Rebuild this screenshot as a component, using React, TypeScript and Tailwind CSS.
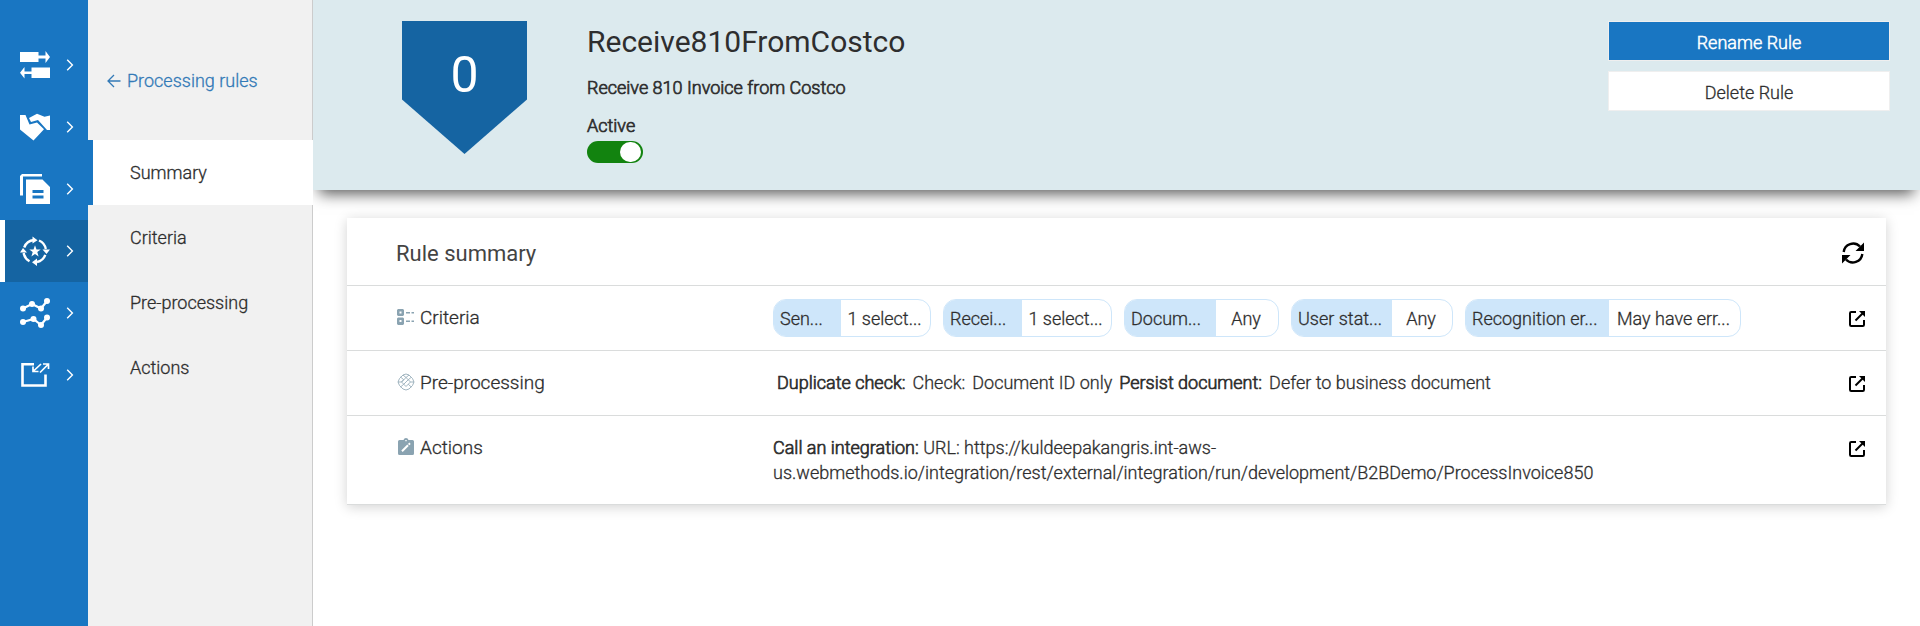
import React from "react";

function Chevron() {
  return (
    <svg width="8" height="12" viewBox="0 0 8 12" fill="none" stroke="currentColor" strokeWidth="1.4" aria-hidden="true">
      <path d="M1.2 .8 6.4 6 1.2 11.2" />
    </svg>
  );
}

function ExchangeIcon() {
  return (
    <svg width="30" height="28" viewBox="0 0 30 28" fill="currentColor" aria-hidden="true">
      <path d="M0 1h18.500v3.500H25.500V0L30 6l-4.500 6V7.500h-7V11H0z" />
      <path d="M30 16.500H11.500v4h-7V16L0 21.800l4.500 5.700v-4.500h7V27H30z" />
    </svg>
  );
}

function HandshakeIcon() {
  return (
    <svg width="30" height="28" viewBox="0 0 30 28" fill="currentColor" aria-hidden="true">
      <path d="M0 2h5.500l4 9.500 7.500-2L24 16.300 13.500 27.500 0 16.500z" />
      <path d="M9 5 17 .8l7.500 3L30 2.500V17h-3L18 7l-7 2z" />
    </svg>
  );
}

function DocumentsIcon() {
  return (
    <svg width="30" height="30" viewBox="0 0 30 30" fill="currentColor" aria-hidden="true">
      <path d="M2 0h20v2.500H3V21.500H0V2z" />
      <path fillRule="evenodd" d="M6 5.500h16.500L30 13v17H6zM12.500 16v3h11v-3zM12.500 21.500v3h11v-3z" />
    </svg>
  );
}

function ProcessingIcon() {
  return (
    <svg width="30" height="30" viewBox="0 0 30 30" fill="currentColor" aria-hidden="true">
      <g fill="none" stroke="currentColor" strokeWidth="2.400">
        <path d="M4.200 11.500A11.500 11.500 0 0 1 14 4" />
        <path d="M19 4.500A11.500 11.500 0 0 1 25.800 13" />
        <path d="M25.300 18.800A11.500 11.500 0 0 1 17 26" />
        <path d="M9.500 25.200A11.500 11.500 0 0 1 3.700 17" />
      </g>
      <path d="M12.500.5 17.500 4.200 12.500 7.500zM22.500 13.500h7.500L26.500 18zM17 22.500v7.500L12 26.300zM0 16.500 3 12l4 4.500z" />
      <path d="m15 9.200 1.500 4.200h4.200l-3.400 2.700 1.300 4.400-3.600-2.600-3.600 2.600 1.300-4.400-3.400-2.700h4.200z" />
    </svg>
  );
}

function AnalyticsIcon() {
  return (
    <svg width="30" height="30" viewBox="0 0 30 30" fill="currentColor" aria-hidden="true">
      <g fill="none" stroke="currentColor" strokeWidth="2.200">
        <path d="m3 10.500 9-4.500 9 4.500 6-7.500" />
        <path d="m3 24 10.500-3L21 27l6-7.500" />
      </g>
      <circle cx="3" cy="10.500" r="3" />
      <circle cx="12" cy="6" r="3" />
      <circle cx="21" cy="10.500" r="3" />
      <circle cx="27" cy="3" r="3" />
      <circle cx="3" cy="24" r="3" />
      <circle cx="13.500" cy="21" r="3" />
      <circle cx="21" cy="27" r="3" />
      <circle cx="27" cy="19.500" r="3" />
    </svg>
  );
}

function ImportExportIcon() {
  return (
    <svg width="30" height="26" viewBox="0 0 30 26" fill="none" stroke="currentColor" aria-hidden="true">
      <path strokeWidth="2.600" d="M14 2.300H2.500V23.500h23V12.500" />
      <path strokeWidth="1.700" d="m21 2-8 7.500M13 4.500v5h5.500M20 10.500l8-8M23 2h5.500v5" />
    </svg>
  );
}

const MODULES = [
  { name: "Exchange", icon: <ExchangeIcon /> },
  { name: "Partners", icon: <HandshakeIcon /> },
  { name: "Documents", icon: <DocumentsIcon /> },
  { name: "Processing rules", icon: <ProcessingIcon />, active: true },
  { name: "Analytics", icon: <AnalyticsIcon /> },
  { name: "Import and export", icon: <ImportExportIcon /> },
];

const SECTIONS = ["Summary", "Criteria", "Pre-processing", "Actions"];

function ModuleNav() {
  return (
    <nav aria-label="Modules" className="flex w-[88px] shrink-0 flex-col bg-[#1976c2] pt-[34px] text-white">
      {MODULES.map((m) => (
        <a
          key={m.name}
          href="#"
          aria-label={m.name}
          className={
            "flex h-[62px] items-center justify-between border-l-[5px] pr-[14px] pl-[15px] " +
            (m.active ? "border-white bg-[#1564a2]" : "border-transparent")
          }
        >
          {m.icon}
          <Chevron />
        </a>
      ))}
    </nav>
  );
}

function SectionNav() {
  return (
    <nav aria-label="Rule sections" className="flex w-[225px] shrink-0 flex-col border-r border-[#cccccc] bg-[#f1f1f1]">
      <a href="#" className="flex h-[140px] items-center gap-1 pt-[22px] pl-[19px] text-lg text-[#337ab7]">
        <svg width="16" height="14" viewBox="0 0 16 14" fill="none" stroke="currentColor" strokeWidth="1.300" aria-hidden="true">
          <path d="M7 1 1 7l6 6M1 7h12.500" />
        </svg>
        Processing rules
      </a>
      {SECTIONS.map((s, i) => (
        <a
          key={s}
          href="#"
          className={
            "flex h-[65px] items-center border-l-[5px] pl-[37px] text-lg " +
            (i === 0 ? "-mr-px border-[#1976c2] bg-white" : "border-transparent")
          }
        >
          {s}
        </a>
      ))}
    </nav>
  );
}

function Header() {
  return (
    <header className="relative flex items-start bg-[#dceaee] pt-[21px] pr-[30px] pb-[27px] pl-[89px] shadow-[0_10px_14px_-6px_rgba(0,0,0,0.65)]">
      <div className="flex h-[133px] w-[125px] shrink-0 justify-center bg-[#1564a2] pt-[18px] text-[50px] leading-[72px] font-normal text-white [-webkit-text-stroke:0px] [clip-path:polygon(0_0,100%_0,100%_59%,50%_100%,0_59%)]">
        0
      </div>
      <div className="ml-[60px] flex flex-1 flex-col">
        <h1 className="text-3xl leading-[42px] font-normal [-webkit-text-stroke:0px]">Receive810FromCostco</h1>
        <p className="mt-[13px] text-lg leading-6 [-webkit-text-stroke:0.7px]">Receive 810 Invoice from Costco</p>
        <label htmlFor="active" className="mt-[14px] text-lg leading-6 [-webkit-text-stroke:0.7px]">
          Active
        </label>
        <input
          id="active"
          type="checkbox"
          role="switch"
          defaultChecked
          className="mt-[3px] h-[22px] w-14 appearance-none rounded-full bg-[#12830f] before:mt-px before:ml-[33px] before:block before:h-5 before:w-[21px] before:rounded-full before:bg-white before:content-['']"
        />
      </div>
      <div className="flex w-[282px] flex-col gap-[10px] text-lg">
        <button className="h-10 border border-[#efefef] bg-[#1976c2] pt-[3px] text-white [-webkit-text-stroke:0.5px]">Rename Rule</button>
        <button className="h-10 border border-[#efefef] bg-white pt-[3px]">Delete Rule</button>
      </div>
    </header>
  );
}

function Chip({ label, value, labelWidth, valueWidth }: { label: string; value: string; labelWidth: number; valueWidth: number }) {
  return (
    <div className="flex h-[38px] overflow-hidden rounded-[13px] border border-[#cee6fa] leading-[38px]">
      <span className="bg-[#cee6fa] pl-[6px]" style={{ width: labelWidth }}>{label}</span>
      <span className="pr-[2px] text-center" style={{ width: valueWidth }}>{value}</span>
    </div>
  );
}

const CHIPS = [
  { label: "Sen...", value: "1 select...", labelWidth: 67, valueWidth: 89 },
  { label: "Recei...", value: "1 select...", labelWidth: 78, valueWidth: 89 },
  { label: "Docum...", value: "Any", labelWidth: 91, valueWidth: 62 },
  { label: "User stat...", value: "Any", labelWidth: 100, valueWidth: 60 },
  { label: "Recognition er...", value: "May have err...", labelWidth: 143, valueWidth: 131 },
];

function OpenIcon() {
  return (
    <svg width="18" height="18" viewBox="0 0 18 18" fill="none" stroke="currentColor" strokeWidth="2" aria-hidden="true">
      <path d="M8 2H3.200Q2 2 2 3.200v11.600Q2 16 3.200 16h11.600Q16 16 16 14.800V10" />
      <path d="m7.500 10.500 8-8" />
      <path d="M11 1h6v6z" fill="currentColor" stroke="none" />
    </svg>
  );
}

function Row({ icon, title, className, children }: { icon: React.ReactNode; title: string; className: string; children: React.ReactNode }) {
  return (
    <section className={"flex items-start border-t border-[#dadcdc] pr-5 pl-[50px] " + className}>
      <h3 className="mt-5 flex w-[376px] shrink-0 items-center gap-[5px] text-[19px] leading-6">
        <span className="flex w-[18px] justify-center pb-[2px] text-[#8aa3b1]">{icon}</span>
        {title}
      </h3>
      <div className="min-w-0 flex-1">{children}</div>
      <button aria-label={"Open " + title} className="mt-6 shrink-0 text-black">
        <OpenIcon />
      </button>
    </section>
  );
}

function CriteriaIcon() {
  return (
    <svg width="18" height="16" viewBox="0 0 18 16" fill="currentColor" aria-hidden="true">
      <path fillRule="evenodd" d="M1 0h5l1 1v5L6 7H1L0 6V1zM2.500 2.500v2h2v-2zM1 8.500h5l1 1V15l-1 1H1l-1-1V9.500zM2.500 11v2h2v-2z" />
      <path d="M9 3h4v1.500H9zM14.500 3H17v1.500h-2.500zM9 11.500h4V13H9zM14.500 11.500H17V13h-2.500z" />
    </svg>
  );
}

function PreprocessingIcon() {
  return (
    <svg width="18" height="18" viewBox="0 0 18 18" fill="none" stroke="currentColor" strokeWidth=".8" aria-hidden="true">
      <path d="M6 2 9 1l3 1 3.500 3.500L17 9l-1.500 3.500L12 16l-3 1-3-1-3.500-3.500L1 9l1.500-3.500z" />
      <path d="M9 4.500 13.500 9 9 13.500 4.500 9zM6 2l3 2.500L12 2M1 9h3.500L6.700 6.700 3.500 4M14 4.500l-2.700 2.200M13.500 9H17M3.500 14l3.200-2.700M11.300 11.300l3 2.700M6.700 11.300l4.600-4.600" />
    </svg>
  );
}

function ActionsIcon() {
  return (
    <svg width="18" height="18" viewBox="0 0 18 18" aria-hidden="true">
      <path fill="currentColor" fillRule="evenodd" d="M2.500 2H6.500a2.600 2.600 0 0 1 5 0H15.500Q17 2 17 3.500v12Q17 17 15.500 17h-13Q1 17 1 15.500v-12Q1 2 2.500 2zM8.300 2v1.300h1.400V2z" />
      <path stroke="#fff" strokeWidth="2" d="m5 13.300 6-6M11.700 6.600l1.300-1.300" />
    </svg>
  );
}

function SummaryCard() {
  return (
    <div className="mx-[34px] mt-7 border-b border-[#dadcdc] bg-white text-lg shadow-[0_2px_12px_rgba(0,0,0,0.18)]">
      <div className="flex h-[67px] items-center justify-between pt-[2px] pr-[21px] pl-[49px]">
        <h2 className="pt-[3px] text-[22px] font-normal text-[#444444] [-webkit-text-stroke:0px]">Rule summary</h2>
        <button aria-label="Refresh" className="text-black">
          <svg width="24" height="24" viewBox="0 0 24 24" fill="none" stroke="currentColor" strokeWidth="2.400" aria-hidden="true">
            <path d="M2.700 11A9.500 9.500 0 0 1 19 5.500M21.300 13A9.500 9.500 0 0 1 5 18.500" />
            <path fill="currentColor" stroke="none" d="M23 1.500v8.500h-8.500zM1 22.500V14h8.500z" />
          </svg>
        </button>
      </div>
      <Row icon={<CriteriaIcon />} title="Criteria" className="h-[65px]">
        <div className="mt-[13px] flex gap-3">
          {CHIPS.map((c) => (
            <Chip key={c.label} {...c} />
          ))}
        </div>
      </Row>
      <Row icon={<PreprocessingIcon />} title="Pre-processing" className="h-[65px]">
        <p className="mt-5 flex gap-[7px] pl-1 leading-6">
          <span className="[-webkit-text-stroke:0.7px]">Duplicate check:</span>
          <span>Check:</span>
          <span>Document ID only</span>
          <span className="[-webkit-text-stroke:0.7px]">Persist document:</span>
          <span>Defer to business document</span>
        </p>
      </Row>
      <Row icon={<ActionsIcon />} title="Actions" className="pb-[19px]">
        <p className="mt-[19px] max-w-[900px] leading-[25px]">
          <span className="[-webkit-text-stroke:0.7px]">Call an integration:</span> URL:
          {" https://kuldeepakangris.int-aws-us.webmethods.io/integration/rest/external/integration/run/development/B2BDemo/ProcessInvoice850"}
        </p>
      </Row>
    </div>
  );
}

export default function App() {
  return (
    <div className="flex min-h-screen bg-white font-['Roboto',sans-serif] font-light text-[#2e2e2e] [-webkit-text-stroke:0.3px]">
      <ModuleNav />
      <SectionNav />
      <main className="min-w-0 flex-1 overflow-hidden">
        <Header />
        <SummaryCard />
      </main>
    </div>
  );
}
